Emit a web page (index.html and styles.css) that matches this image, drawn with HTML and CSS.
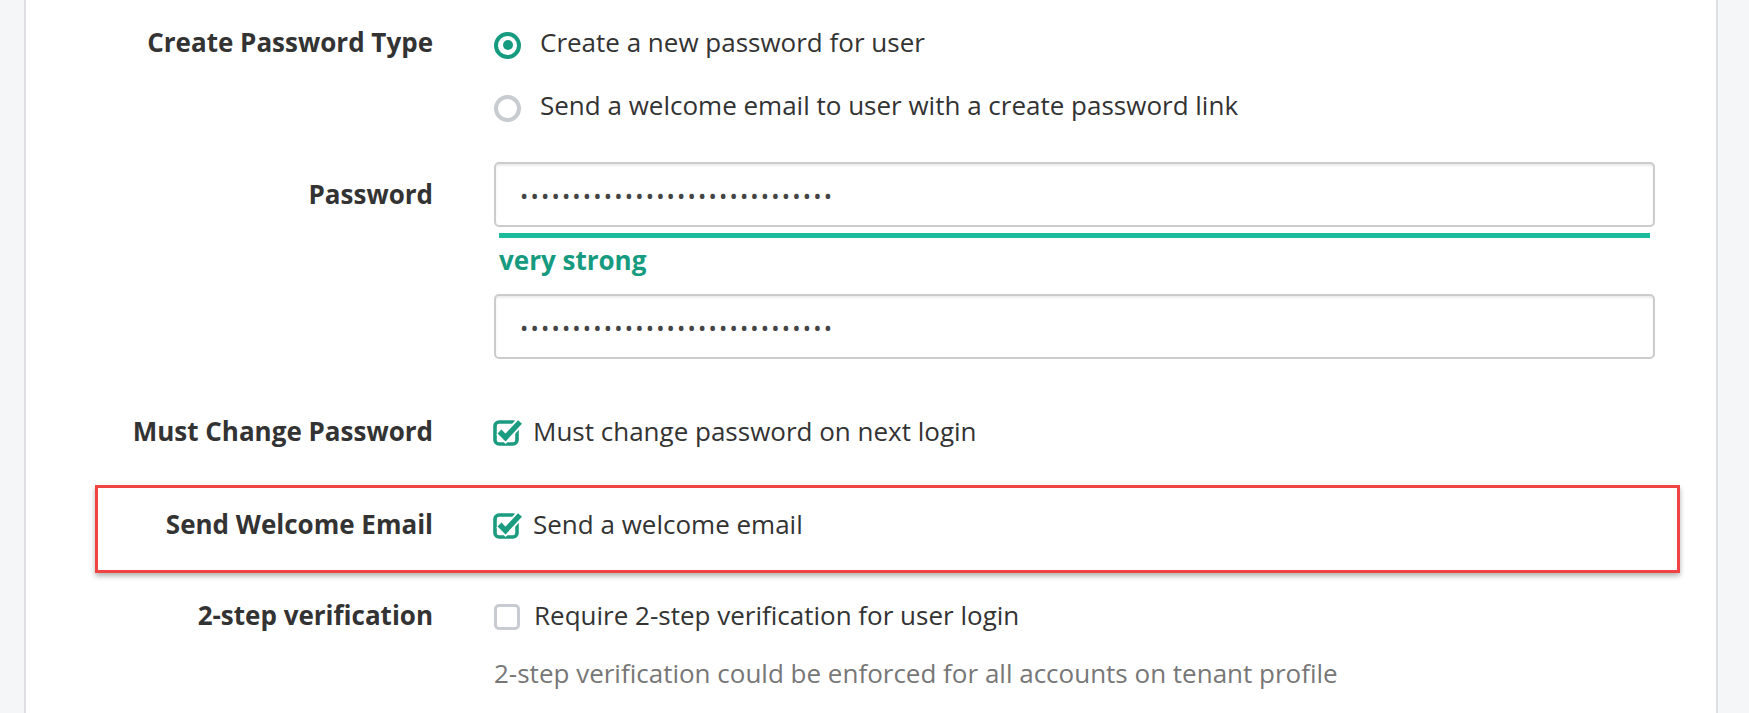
FILE: index.html
```html
<!DOCTYPE html>
<html lang="en">
<head>
<meta charset="utf-8">
<title>Create user</title>
<link rel="stylesheet" href="styles.css">
</head>
<body>
<div class="page">
  <div class="panel">
    <div class="row row-type">
      <div class="label">Create Password Type</div>
      <div class="control options">
        <label class="option"><span class="radio checked"></span><span>Create a new password for user</span></label>
        <label class="option"><span class="radio"></span><span>Send a welcome email to user with a create password link</span></label>
      </div>
    </div>

    <div class="row row-password">
      <div class="label label-input">Password</div>
      <div class="control">
        <input class="input" type="password" value="..............................">
        <div class="strength-bar"></div>
        <div class="strength-text">very strong</div>
        <input class="input" type="password" value="..............................">
      </div>
    </div>

    <div class="row row-check">
      <div class="label">Must Change Password</div>
      <div class="control">
        <label class="check"><svg class="check-icon" viewBox="0 0 32 30" width="32" height="30"><rect x="2" y="5" width="22" height="22" rx="4" fill="none" stroke="#1b9b80" stroke-width="3.6"/><path d="M6.5 14.5 L12.5 20.5 L27 5" fill="none" stroke="#fff" stroke-width="9" stroke-linecap="butt"/><path d="M6.5 14.5 L12.5 20.5 L27 5" fill="none" stroke="#1b9b80" stroke-width="5.4" stroke-linejoin="miter"/></svg><span>Must change password on next login</span></label>
      </div>
    </div>

    <div class="row row-check highlight">
      <div class="label">Send Welcome Email</div>
      <div class="control">
        <label class="check"><svg class="check-icon" viewBox="0 0 32 30" width="32" height="30"><rect x="2" y="5" width="22" height="22" rx="4" fill="none" stroke="#1b9b80" stroke-width="3.6"/><path d="M6.5 14.5 L12.5 20.5 L27 5" fill="none" stroke="#fff" stroke-width="9" stroke-linecap="butt"/><path d="M6.5 14.5 L12.5 20.5 L27 5" fill="none" stroke="#1b9b80" stroke-width="5.4" stroke-linejoin="miter"/></svg><span>Send a welcome email</span></label>
      </div>
    </div>

    <div class="row row-check row-2fa">
      <div class="label">2-step verification</div>
      <div class="control">
        <label class="check"><span class="box-empty"></span><span>Require 2-step verification for user login</span></label>
        <div class="help">2-step verification could be enforced for all accounts on tenant profile</div>
      </div>
    </div>
  </div>
</div>
</body>
</html>
```

FILE: styles.css
```css
html, body {
  margin: 0;
  padding: 0;
}
body {
  background: #f5f6f8;
  font-family: "Open Sans", "Liberation Sans", sans-serif;
  color: #333333;
  font-size: 26px;
}
.page {
  display: flex;
  height: 713px;
  overflow: hidden;
}
.panel {
  margin-left: 24px;
  width: 1694px;
  background: #ffffff;
  border-left: 2px solid #dedfe2;
  border-right: 2px solid #dedfe2;
  padding-top: 22px;
  box-sizing: border-box;
}
.row {
  display: grid;
  grid-template-columns: 407px 1161px;
  column-gap: 61px;
}
.label {
  text-align: right;
  font-weight: 700;
  line-height: 40px;
  color: #333333;
}
.options {
  display: flex;
  flex-direction: column;
  gap: 23px;
}
.option, .check {
  display: flex;
  align-items: center;
  height: 40px;
  line-height: 40px;
}
.radio {
  width: 27px;
  height: 27px;
  box-sizing: border-box;
  border-radius: 50%;
  border: 4.5px solid #c8cbcf;
  margin-right: 19px;
  margin-top: 6px;
  flex: none;
  display: flex;
  align-items: center;
  justify-content: center;
}
.radio.checked {
  border-color: #179b80;
}
.radio.checked::after {
  content: "";
  width: 10px;
  height: 10px;
  border-radius: 50%;
  background: #179b80;
}
.row-password {
  margin-top: 37px;
}
.label-input {
  line-height: 65px;
}
.input {
  display: block;
  width: 100%;
  height: 65px;
  box-sizing: border-box;
  border: 2px solid #cccccc;
  border-radius: 5px;
  box-shadow: inset 0 2px 2px rgba(0, 0, 0, 0.08);
  padding: 0 24px;
  font-family: "Open Sans", "Liberation Sans", sans-serif;
  font-size: 22px;
  letter-spacing: 2.2px;
  color: #444444;
  background: #ffffff;
  outline: none;
}
.strength-bar {
  margin: 6px 5px 0;
  height: 5px;
  background: #1abc9c;
}
.strength-text {
  margin-top: 6px;
  margin-left: 5px;
  font-weight: 700;
  color: #179b80;
  line-height: 32px;
  margin-bottom: 18px;
}
.row-check {
  margin-top: 52px;
}
.row-check.highlight {
  margin-top: 53px;
}
.row-check.row-2fa {
  margin-top: 51px;
}
.check-icon {
  flex: none;
  margin-right: 8px;
  margin-left: -1px;
  margin-top: 2px;
}
.highlight {
  position: relative;
}
.highlight::before {
  content: "";
  position: absolute;
  left: 69px;
  top: -19px;
  width: 1585px;
  height: 88px;
  box-sizing: border-box;
  border: 3px solid #f04444;
  box-shadow: 0 3px 5px rgba(0, 0, 0, 0.3);
  pointer-events: none;
}
.box-empty {
  width: 26px;
  height: 26px;
  box-sizing: border-box;
  border: 3.5px solid #c8ccd2;
  border-radius: 5px;
  margin-right: 14px;
  margin-top: 4px;
  flex: none;
}
.help {
  margin-top: 18px;
  line-height: 40px;
  color: #777777;
}
```
